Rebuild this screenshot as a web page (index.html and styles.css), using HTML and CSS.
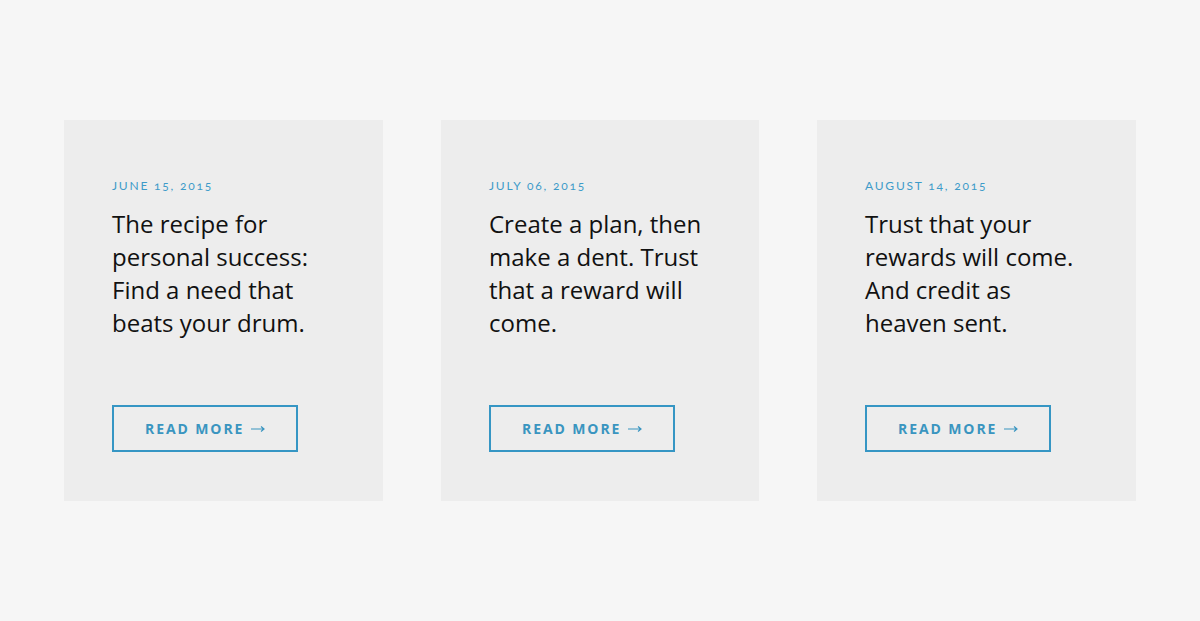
FILE: index.html
```html
<!DOCTYPE html>
<html lang="en">
<head>
  <meta charset="UTF-8" />
  <title>Posts</title>
  <link rel="stylesheet" href="styles.css">
</head>
<body>
  <div class="posts">
    <div class="card">
      <div class="date">June 15, 2015</div>
      <h2>The recipe for personal success: Find a need that beats your drum.</h2>
      <a href="#" class="btn">Read more <svg class="arrow" width="14" height="8" viewBox="0 0 14 8"><path d="M0 4H13M10 1.5L13 4L10 6.5" /></svg></a>
    </div>
    <div class="card">
      <div class="date">July 06, 2015</div>
      <h2>Create a plan, then make a dent. Trust that a reward will come.</h2>
      <a href="#" class="btn">Read more <svg class="arrow" width="14" height="8" viewBox="0 0 14 8"><path d="M0 4H13M10 1.5L13 4L10 6.5" /></svg></a>
    </div>
    <div class="card">
      <div class="date">August 14, 2015</div>
      <h2>Trust that your rewards will come. And credit as heaven sent.</h2>
      <a href="#" class="btn">Read more <svg class="arrow" width="14" height="8" viewBox="0 0 14 8"><path d="M0 4H13M10 1.5L13 4L10 6.5" /></svg></a>
    </div>
  </div>
</body>
</html>
```

FILE: styles.css
```css
* {
  box-sizing: border-box;
}
body {
  margin: 0;
  background: #f6f6f6;
  font-family: 'Open Sans', sans-serif;
}

.posts {
  display: grid;
  grid-template-columns: 319px 318px 319px;
  gap: 58px;
  padding: 120px 64px;
}

.card {
  background: #ededed;
  height: 381px;
  padding: 58px 48px 49px;
  display: flex;
  flex-direction: column;
  align-items: flex-start;
}

.date {
  font-family: 'Lato', sans-serif;
  font-size: 12px;
  line-height: 16px;
  letter-spacing: 1.8px;
  text-transform: uppercase;
  font-variant-numeric: oldstyle-nums;
  color: #3d9bc9;
}

h2 {
  margin: 13px 0 0;
  font-size: 24px;
  line-height: 33px;
  font-weight: 400;
  color: #111;
}

.btn {
  margin-top: auto;
  display: inline-block;
  border: 2px solid #3696c4;
  padding: 0 31px 0 31px;
  height: 47px;
  line-height: 43px;
  font-size: 14px;
  font-weight: 700;
  letter-spacing: 1.9px;
  text-transform: uppercase;
  text-decoration: none;
  color: #3a95c0;
}

.btn .arrow {
  margin-left: 1px;
  vertical-align: 1px;
  fill: none;
  stroke: #3a95c0;
  stroke-width: 1.2;
}
```
